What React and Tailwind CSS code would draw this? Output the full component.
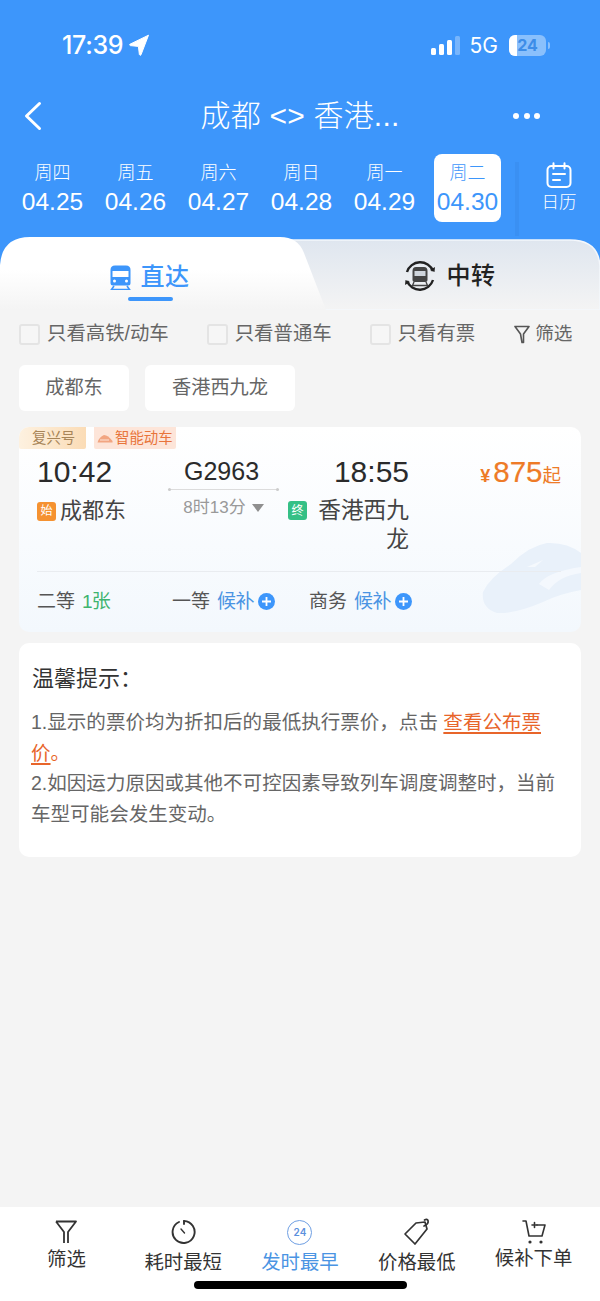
import React from 'react';

const FONT = 'font-["Liberation_Sans","Noto_Sans_CJK_SC",sans-serif]';

const dates = [
  { week: '周四', date: '04.25' },
  { week: '周五', date: '04.26' },
  { week: '周六', date: '04.27' },
  { week: '周日', date: '04.28' },
  { week: '周一', date: '04.29' },
  { week: '周二', date: '04.30', active: true },
];

const StatusBar = () => (
  <div className="h-[90px] flex items-center justify-between pl-[62px] pr-[50px] text-white">
    <div className="flex items-center gap-[6px]">
      <span className='font-["Inter"] text-[25px] font-medium tracking-[-0.3px] leading-none'>17:39</span>
      <svg width="20" height="22" viewBox="0 0 20 22">
        <path d="M19.5 1.2 L1 10.2 Q0 11 1.3 11.6 L9.4 12.4 L10.4 20.6 Q11 22 12 20.8 Z" fill="white" stroke="white" strokeWidth="1" strokeLinejoin="round" />
      </svg>
    </div>
    <div className="flex items-center">
      <div className="flex items-end gap-[3px] h-[20px]">
        <span className="w-[5px] h-[7px] rounded-[1.5px] bg-white" />
        <span className="w-[5px] h-[11px] rounded-[1.5px] bg-white" />
        <span className="w-[5px] h-[15px] rounded-[1.5px] bg-white" />
        <span className="w-[5px] h-[19px] rounded-[1.5px] bg-white/30" />
      </div>
      <span className='ml-[10px] font-["Inter"] text-[21px] leading-none'>5G</span>
      <div className="ml-[11px] relative w-[37px] h-[21px] rounded-[6px] bg-white/40 overflow-hidden flex items-center justify-center">
        <span className="absolute left-0 top-0 bottom-0 w-[8px] bg-white" />
        <span className='relative font-["Inter"] text-[16px] font-bold leading-none text-[#3d8de8]'>24</span>
      </div>
      <span className="ml-[2px] w-[2px] h-[7px] rounded-r-full bg-white/40" />
    </div>
  </div>
);

const NavBar = () => (
  <div className="h-[52px] flex items-center px-[23px] text-white">
    <div className="w-[100px]">
      <svg width="19" height="30" viewBox="0 0 19 30" fill="none">
        <path d="M16.5 2.5 L3.5 15 L16.5 27.5" stroke="white" strokeWidth="3" strokeLinecap="round" strokeLinejoin="round" />
      </svg>
    </div>
    <div className="flex-1 text-center text-[30px] font-light leading-none tracking-[0.2px]">成都 &lt;&gt; 香港...</div>
    <div className="w-[100px] flex justify-end gap-[4.5px] pr-[37px]">
      <span className="w-[6px] h-[6px] rounded-full bg-white" />
      <span className="w-[6px] h-[6px] rounded-full bg-white" />
      <span className="w-[6px] h-[6px] rounded-full bg-white" />
    </div>
  </div>
);

const DateStrip = () => (
  <div className="mt-[12px] h-[83px] flex pl-[11px]">
    {dates.map((d) => (
      <div key={d.date} className="w-[83px] flex justify-center">
        <div className={`w-[67px] h-[68px] pt-[3px] rounded-[8px] flex flex-col items-center justify-center ${d.active ? 'bg-white text-[#3d96fb]' : 'text-white'}`}>
          <span className="text-[18px] leading-[22px] font-light">{d.week}</span>
          <span className="text-[24.5px] leading-[32px] mt-[2px]">{d.date}</span>
        </div>
      </div>
    ))}
    <div className="w-[4px] h-[74px] mt-[8px] ml-[6px] bg-[#3a90f3]" />
    <div className="ml-[20px] w-[40px] flex flex-col items-center text-white">
      <svg className="mt-[8px]" width="26" height="26" viewBox="0 0 26 26" fill="none" stroke="white" strokeLinecap="round">
        <rect x="1.5" y="4" width="23" height="21" rx="4" strokeWidth="2" />
        <path d="M7.5 1.2 V6.5 M18.5 1.2 V6.5" strokeWidth="2" />
        <path d="M7 12 H19 M7 18 H14" strokeWidth="2" />
      </svg>
      <span className="text-[17.5px] leading-none mt-[6px] font-light whitespace-nowrap">日历</span>
    </div>
  </div>
);

const TrainIcon = ({ color, window }) => (
  <svg width="21" height="25" viewBox="0 0 21 25">
    <path d="M5 0.5 H16 Q20.5 0.5 20.5 5 V18 Q20.5 20.5 18 20.5 H3 Q0.5 20.5 0.5 18 V5 Q0.5 0.5 5 0.5 Z" fill={color} />
    <rect x="2.5" y="6" width="16" height="6" fill={window} />
    <circle cx="4.5" cy="16" r="1.5" fill={window} />
    <circle cx="16.5" cy="16" r="1.5" fill={window} />
    <path d="M4 21 L1.5 24.5 H19.5 L17 21" fill="none" stroke={color} strokeWidth="1.6" />
  </svg>
);

const TransferIcon = () => (
  <svg width="32" height="32" viewBox="0 0 32 32" fill="none">
    <path d="M3 12 A13.8 13.8 0 0 1 29 11" stroke="#222" strokeWidth="2.4" />
    <path d="M29 20 A13.8 13.8 0 0 1 3 21" stroke="#222" strokeWidth="2.4" />
    <path d="M26 10 L30.5 12 L31 7 Z" fill="#222" />
    <path d="M6 22 L1.5 20 L1 25 Z" fill="#222" />
    <path d="M12 7 H20 Q23.5 7 23.5 11 V20 Q23.5 22 21.5 22 H10.5 Q8.5 22 8.5 20 V11 Q8.5 7 12 7 Z" fill="#444" />
    <rect x="10.5" y="11" width="11" height="5" fill="#cfd5dc" />
    <path d="M10 22 L8.5 25.5 H23.5 L22 22" stroke="#444" strokeWidth="1.4" />
  </svg>
);

const Tabs = () => (
  <div className="relative h-[73px] bg-[#3d96fb]">
    {/* tab shapes lie behind the labels */}
    <svg className="absolute inset-0" width="600" height="73" viewBox="0 0 600 73">
      <defs>
        <linearGradient id="backTab" x1="0" y1="0" x2="0" y2="1">
          <stop offset="0" stopColor="#dfe6ef" />
          <stop offset="1" stopColor="#f4f4f4" />
        </linearGradient>
        <linearGradient id="frontTab" x1="0" y1="0" x2="0" y2="1">
          <stop offset="0.45" stopColor="#ffffff" />
          <stop offset="1" stopColor="#f4f4f4" />
        </linearGradient>
      </defs>
      <path d="M270 3 H570 Q600 3 600 32 V73 H270 Z" fill="url(#backTab)" stroke="#f4f7fb" strokeWidth="1.5" />
      <path d="M0 28 Q2 0 30 0 H280 Q298 0 304 16 L326 73 H0 Z" fill="url(#frontTab)" />
    </svg>
    <div className="relative h-full flex">
      <div className="w-[300px] flex flex-col items-center">
        <div className="mt-[27px] flex items-center gap-[10px] -ml-[1px]">
          <TrainIcon color="#3d96fb" window="#ffffff" />
          <span className="text-[24px] leading-[26px] font-medium text-[#3d96fb] tracking-[0.5px]">直达</span>
        </div>
        <span className="mt-[7px] w-[45px] h-[4px] rounded-full bg-[#3d96fb]" />
      </div>
      <div className="flex-1 flex justify-center">
        <div className="mt-[23px] h-[32px] flex items-center gap-[11px] -ml-[1px]">
          <TransferIcon />
          <span className="text-[24px] leading-[26px] font-medium text-[#222] tracking-[0.5px]">中转</span>
        </div>
      </div>
    </div>
  </div>
);

const Check = ({ label, className }) => (
  <div className={`flex items-center ${className}`}>
    <span className="w-[21px] h-[21px] rounded-[3px] border-2 border-[#e4e4e4] bg-[#f6f6f6]" />
    <span className="ml-[7px] text-[19.4px] leading-none text-[#666]">{label}</span>
  </div>
);

const Filters = () => (
  <div className="h-[48px] flex items-center pl-[19px]">
    <Check label="只看高铁/动车" />
    <Check label="只看普通车" className="ml-[38px]" />
    <Check label="只看有票" className="ml-[38px]" />
    <div className="ml-[39px] flex items-center gap-[5px]">
      <svg width="16" height="19" viewBox="0 0 16 19" fill="none" stroke="#555" strokeWidth="1.6" strokeLinejoin="round">
        <path d="M1 1.5 H15 L9.5 9 V17.5 H8 L6.5 9 Z" />
      </svg>
      <span className="text-[18.6px] leading-none text-[#666]">筛选</span>
    </div>
  </div>
);

const Stations = () => (
  <div className="mt-[7px] flex gap-[16px] pl-[19px]">
    <div className="w-[110px] h-[46px] rounded-[6px] bg-white flex items-center justify-center text-[19.2px] text-[#666]">成都东</div>
    <div className="w-[150px] h-[46px] rounded-[6px] bg-white flex items-center justify-center text-[19.2px] text-[#666]">香港西九龙</div>
  </div>
);

const Plus = () => (
  <span className="ml-[4px] w-[17px] h-[17px] rounded-full bg-[#3d96fb] flex items-center justify-center">
    <svg width="11" height="11" viewBox="0 0 11 11"><path d="M5.5 1 V10 M1 5.5 H10" stroke="white" strokeWidth="1.8" /></svg>
  </span>
);

const Seat = ({ name, status, green, className }) => (
  <div className={`flex items-center text-[19px] leading-none ${className}`}>
    <span className="text-[#555]">{name}</span>
    <span className={`ml-[7px] ${green ? 'text-[#3fb46f] tracking-[-0.8px]' : 'text-[#4a94e3] tracking-[-0.5px]'}`}>{status}</span>
    {!green && <Plus />}
  </div>
);

const TrainCard = () => (
  <div className="relative mx-[19px] mt-[16px] h-[205px] rounded-[10px] overflow-hidden bg-gradient-to-b from-white to-[#f3f8fd]">
    {/* faded train drawing in the corner */}
    <svg className="absolute right-0 bottom-0" width="100" height="92" viewBox="0 0 100 92">
      <path d="M2 52 Q8 38 30 24 Q48 6 66 3 Q86 2 100 13 V50 Q78 54 62 62 Q34 74 16 73 Q0 68 2 52 Z" fill="#e9f1fa" />
      <path d="M46 27 L62 20 L54 27 Z" fill="#f5f9fd" />
      <path d="M58 44 Q66 32 100 27 V33 Q78 36 68 50 Z" fill="#f4f8fd" />
    </svg>
    <div className="flex">
      <div className="w-[67px] h-[22px] rounded-b-[2px] bg-gradient-to-r from-[#fdf1e0] to-[#fbdcb6] flex items-center pl-[13px] text-[14.4px] leading-none text-[#a88558]">复兴号</div>
      <div className="ml-[8px] w-[82px] h-[22px] rounded-b-[2px] bg-[#fde5d9] flex items-center pl-[3px] text-[14.4px] leading-none text-[#e8743b]">
        <svg width="16" height="9" viewBox="0 0 16 9" className="mr-[2px]"><path d="M0.5 8.5 Q2 3 7 1 Q11 1 15.5 7 V8.5 Z" fill="#f2a581" /><path d="M3 6 H12" stroke="#fde5d9" strokeWidth="1" /></svg>
        智能动车
      </div>
    </div>
    <div className="flex pl-[18px]">
      <div className="w-[131px]">
        <div className="text-[30px] leading-[46px] text-[#2b2b2b]">10:42</div>
        <div className="flex items-center h-[30px] mt-[1px]">
          <span className="w-[19px] h-[19px] rounded-[3px] bg-[#f59231] flex items-center justify-center text-[12px] leading-none text-white">始</span>
          <span className="ml-[4px] text-[22px] leading-none text-[#444]">成都东</span>
        </div>
      </div>
      <div className="w-[111px] flex flex-col items-center">
        <div className="text-[25px] leading-[40px] text-[#2b2b2b] mt-[2px] -ml-[4px]">G2963</div>
        <div className="relative mt-[-2px] w-[111px] h-[1px] bg-[#dcdcdc]">
          <span className="absolute left-0 -top-[1px] w-[3px] h-[3px] rounded-full bg-[#cccccc]" />
          <span className="absolute right-0 -top-[1px] w-[3px] h-[3px] rounded-full bg-[#cccccc]" />
        </div>
        <div className="flex items-center mt-[6px] text-[17px] leading-[24px] text-[#999]">
          8时13分
          <span className="ml-[6px] w-0 h-0 border-x-[6px] border-x-transparent border-t-[8px] border-t-[#8f8f8f]" />
        </div>
      </div>
      <div className="ml-[9px] w-[121px] flex flex-col items-end">
        <div className="text-[30px] leading-[46px] text-[#2b2b2b]">18:55</div>
        <div className="flex mt-[1px]">
          <span className="mt-[5px] w-[19px] h-[19px] rounded-[3px] bg-[#35c086] flex items-center justify-center text-[12px] leading-none text-white">终</span>
          <span className="ml-[11px] w-[91px] text-right text-[22.7px] leading-[29px] text-[#444]">香港西九龙</span>
        </div>
      </div>
      <div className="flex-1 flex items-baseline justify-end pr-[20px] text-[#ee7b27] h-[46px] pt-[3px]">
        <span className="text-[18px] font-bold leading-none">¥</span>
        <span className="ml-[3px] text-[29.5px] leading-[40px] [-webkit-text-stroke:0.2px_#ee7b27]">875</span>
        <span className="text-[18.5px] leading-none">起</span>
      </div>
    </div>
    <div className="absolute left-[18px] right-[20px] top-[144px] h-[1px] bg-[#e9ecf0]" />
    <div className="absolute left-[18px] top-[165px] right-0 flex">
      <Seat name="二等" status="1张" green className="w-[135px]" />
      <Seat name="一等" status="候补" className="w-[137px]" />
      <Seat name="商务" status="候补" />
    </div>
  </div>
);

const Tips = () => (
  <div className="mx-[19px] mt-[11px] h-[214px] rounded-[10px] bg-white pl-[12px] pr-[23px] pt-[20px]">
    <div className="text-[22px] leading-[32px] text-[#333] pl-[1px]">温馨提示：</div>
    <div className="mt-[12px] text-[19.55px] leading-[30.7px] text-[#666]">
      1.显示的票价均为折扣后的最低执行票价，点击 <span className="text-[#e8652a] underline decoration-2 underline-offset-[3px]">查看公布票</span>
      <br />
      <span className="text-[#e8652a] underline decoration-2 underline-offset-[3px]">价</span>
      <span className="text-[#e8652a]">。</span>
      <br />
      2.如因运力原因或其他不可控因素导致列车调度调整时，当前车型可能会发生变动。
    </div>
  </div>
);

const bottomItems = [
  {
    label: '筛选',
    offset: 'mt-[1px]',
    icon: (
      <svg width="22" height="24" viewBox="0 0 22 24" fill="none" stroke="#333" strokeWidth="1.8" strokeLinejoin="round">
        <path d="M1 1.5 H21 L13 12 V23 M9 23 V12 L1 1.5" />
      </svg>
    ),
  },
  {
    label: '耗时最短',
    offset: 'mt-[4px]',
    icon: (
      <svg width="25" height="26" viewBox="0 0 25 26" fill="none" stroke="#333" strokeWidth="1.9" strokeLinecap="round">
        <path d="M8 3 A11 11 0 1 0 13 2" />
        <path d="M13 2 V5" />
        <path d="M10 10 L13.5 14" strokeWidth="1.4" />
      </svg>
    ),
  },
  {
    label: '发时最早',
    active: true,
    offset: 'mt-[4px]',
    icon: (
      <div className='w-[25px] h-[25px] rounded-full border-[1.5px] border-[#6f9fe3] flex items-center justify-center font-["Inter"] text-[10px] font-semibold text-[#5b90dd]'>24</div>
    ),
  },
  {
    label: '价格最低',
    offset: 'mt-[4px]',
    icon: (
      <svg width="28" height="28" viewBox="0 0 28 28" fill="none" stroke="#333" strokeWidth="1.7" strokeLinejoin="round" strokeLinecap="round">
        <path d="M13 5 L22 4 L24 11 L12 26 L2 16 Z" />
        <path d="M21 8 Q26 6 25 2.5 Q24 0.5 21.5 2" />
      </svg>
    ),
  },
  {
    label: '候补下单',
    offset: 'mt-[0px]',
    icon: (
      <svg width="24" height="26" viewBox="0 0 24 26" fill="none" stroke="#333" strokeWidth="1.6" strokeLinecap="round" strokeLinejoin="round">
        <path d="M1 2 H4 L7 17 H20 L23 6 H15" />
        <path d="M10 6 H15 M12.5 3.5 V8.5" />
        <circle cx="8" cy="23" r="0.8" fill="#333" />
        <circle cx="19" cy="23" r="0.8" fill="#333" />
      </svg>
    ),
  },
];

const BottomBar = () => (
  <div className="relative h-[94px] bg-white pl-[8px] flex">
    {bottomItems.map((item) => (
      <div key={item.label} className="w-[116.8px] flex flex-col items-center pt-[11px]">
        <div className="h-[28px] flex items-center justify-center">{item.icon}</div>
        <span className={`${item.offset} text-[19.4px] leading-[24px] ${item.active ? 'text-[#4a94e3]' : 'text-[#333]'}`}>{item.label}</span>
      </div>
    ))}
    <span className="absolute left-[194px] bottom-[12px] w-[213px] h-[8px] rounded-full bg-black" />
  </div>
);

export default function App() {
  return (
    <div className={`${FONT} w-[600px] h-[1301px] bg-[#f4f4f4] flex flex-col overflow-hidden`}>
      <div className="bg-[#3d96fb]">
        <StatusBar />
        <NavBar />
        <DateStrip />
      </div>
      <Tabs />
      <Filters />
      <Stations />
      <TrainCard />
      <Tips />
      <div className="flex-1" />
      <BottomBar />
    </div>
  );
}
